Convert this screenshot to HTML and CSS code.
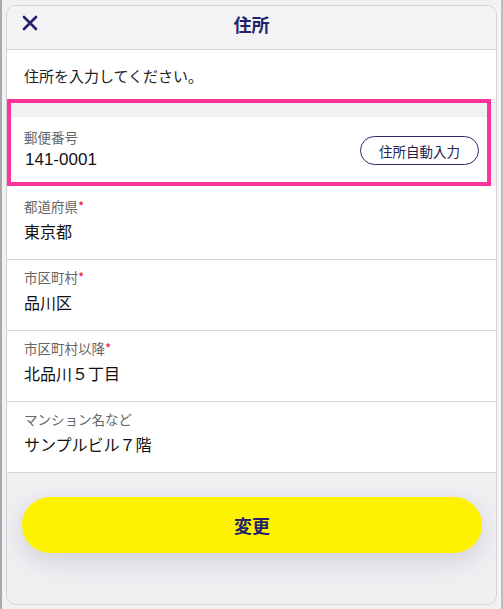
FILE: index.html
```html
<!DOCTYPE html>
<html lang="ja">
<head>
<meta charset="utf-8">
<title>住所</title>
<link rel="stylesheet" href="styles.css">
</head>
<body>
<div class="frame">
  <div class="panel">
    <header class="head">
      <span class="close">
        <svg width="16" height="16" viewBox="0 0 16 16"><path d="M2 2 L14 14 M14 2 L2 14" stroke="#22226a" stroke-width="2.6" stroke-linecap="round"/></svg>
      </span>
      <h1 class="title">住所</h1>
    </header>
    <div class="intro">住所を入力してください。</div>
    <div class="highlight">
      <div class="gap"></div>
      <div class="row postal">
        <div class="field">
          <div class="label">郵便番号</div>
          <div class="value num">141-0001</div>
        </div>
        <button class="auto">住所自動入力</button>
      </div>
    </div>
    <div class="row first">
      <div class="label">都道府県<span class="req">*</span></div>
      <div class="value">東京都</div>
    </div>
    <div class="row">
      <div class="label">市区町村<span class="req">*</span></div>
      <div class="value">品川区</div>
    </div>
    <div class="row">
      <div class="label">市区町村以降<span class="req">*</span></div>
      <div class="value">北品川５丁目</div>
    </div>
    <div class="row">
      <div class="label">マンション名など</div>
      <div class="value">サンプルビル７階</div>
    </div>
    <footer class="foot">
      <button class="submit">変更</button>
    </footer>
  </div>
  <div class="scroll"></div>
</div>
</body>
</html>
```

FILE: styles.css
```css
* { box-sizing: border-box; }
html, body { margin: 0; padding: 0; }
body {
  width: 503px;
  height: 609px;
  overflow: hidden;
  background: #f1f1f3;
  font-family: "Noto Sans CJK JP", "Noto Sans", sans-serif;
  color: #111;
}
.frame {
  display: flex;
  height: 609px;
  border-left: 2px solid #a9a9a9;
}
.panel {
  flex: 1;
  margin: 5px 0 4px 4px;
  border: 1px solid #d2d2d6;
  border-radius: 10px;
  background: #f1f1f4;
  overflow: hidden;
  display: flex;
  flex-direction: column;
}
.scroll {
  width: 6px;
  border-right: 2px solid #bdbdbd;
  background: #f4f4f4;
}
.head {
  height: 44px;
  flex: none;
  display: flex;
  align-items: center;
  justify-content: center;
  position: relative;
  padding-bottom: 7px;
  background: #f3f3f6;
  border-bottom: 1px solid #d6d6da;
}
.close {
  position: absolute;
  left: 15px;
  top: 9px;
  width: 16px;
  height: 16px;
  display: flex;
}
.title {
  margin: 0;
  font-size: 18px;
  font-weight: 700;
  color: #22226a;
  line-height: 24px;
}
.intro {
  height: 49px;
  flex: none;
  background: #fff;
  padding: 2px 17px 0;
  display: flex;
  align-items: center;
  font-size: 15px;
  color: #222;
}
.highlight {
  outline: 4px solid #ff3399;
  outline-offset: -4px;
  margin-right: 5px;
  background: #fff;
  flex: none;
}
.gap {
  height: 18px;
  background: #f1f1f4;
}
.row {
  background: #fff;
  padding: 8px 17px 16px;
  border-bottom: 1px solid #d6d6d6;
  flex: none;
}
.row.first { padding-top: 11px; }
.row.postal {
  height: 69px;
  border-bottom: none;
  padding: 11px 12px 0 17px;
  display: flex;
  align-items: flex-start;
  justify-content: space-between;
}
.label {
  font-size: 13.5px;
  line-height: 18px;
  color: #666;
}
.req { color: #e0103a; }
.value {
  margin-top: 4px;
  font-size: 16px;
  line-height: 24px;
  color: #111;
}
.postal .value { margin-top: 2px; }
.num {
  font-family: "Liberation Sans", Arial, sans-serif;
  font-size: 17px;
  padding-left: 1px;
}
.auto {
  margin-top: 8px;
  height: 29px;
  width: 119px;
  border: 1px solid #2a2a6a;
  border-radius: 15px;
  background: #fff;
  font-family: "Noto Sans CJK JP", sans-serif;
  font-size: 13.5px;
  color: #22224a;
  padding: 0;
}
.foot {
  flex: 1;
  padding: 24px 14px 0 15px;
  background: #f0f0f3;
}
.submit {
  display: block;
  width: 100%;
  height: 56px;
  border: none;
  border-radius: 28px;
  background: #fff200;
  box-shadow: 0 8px 24px rgba(90, 90, 110, 0.22);
  font-family: "Noto Sans CJK JP", sans-serif;
  font-size: 18px;
  font-weight: 700;
  color: #22226a;
}
```
